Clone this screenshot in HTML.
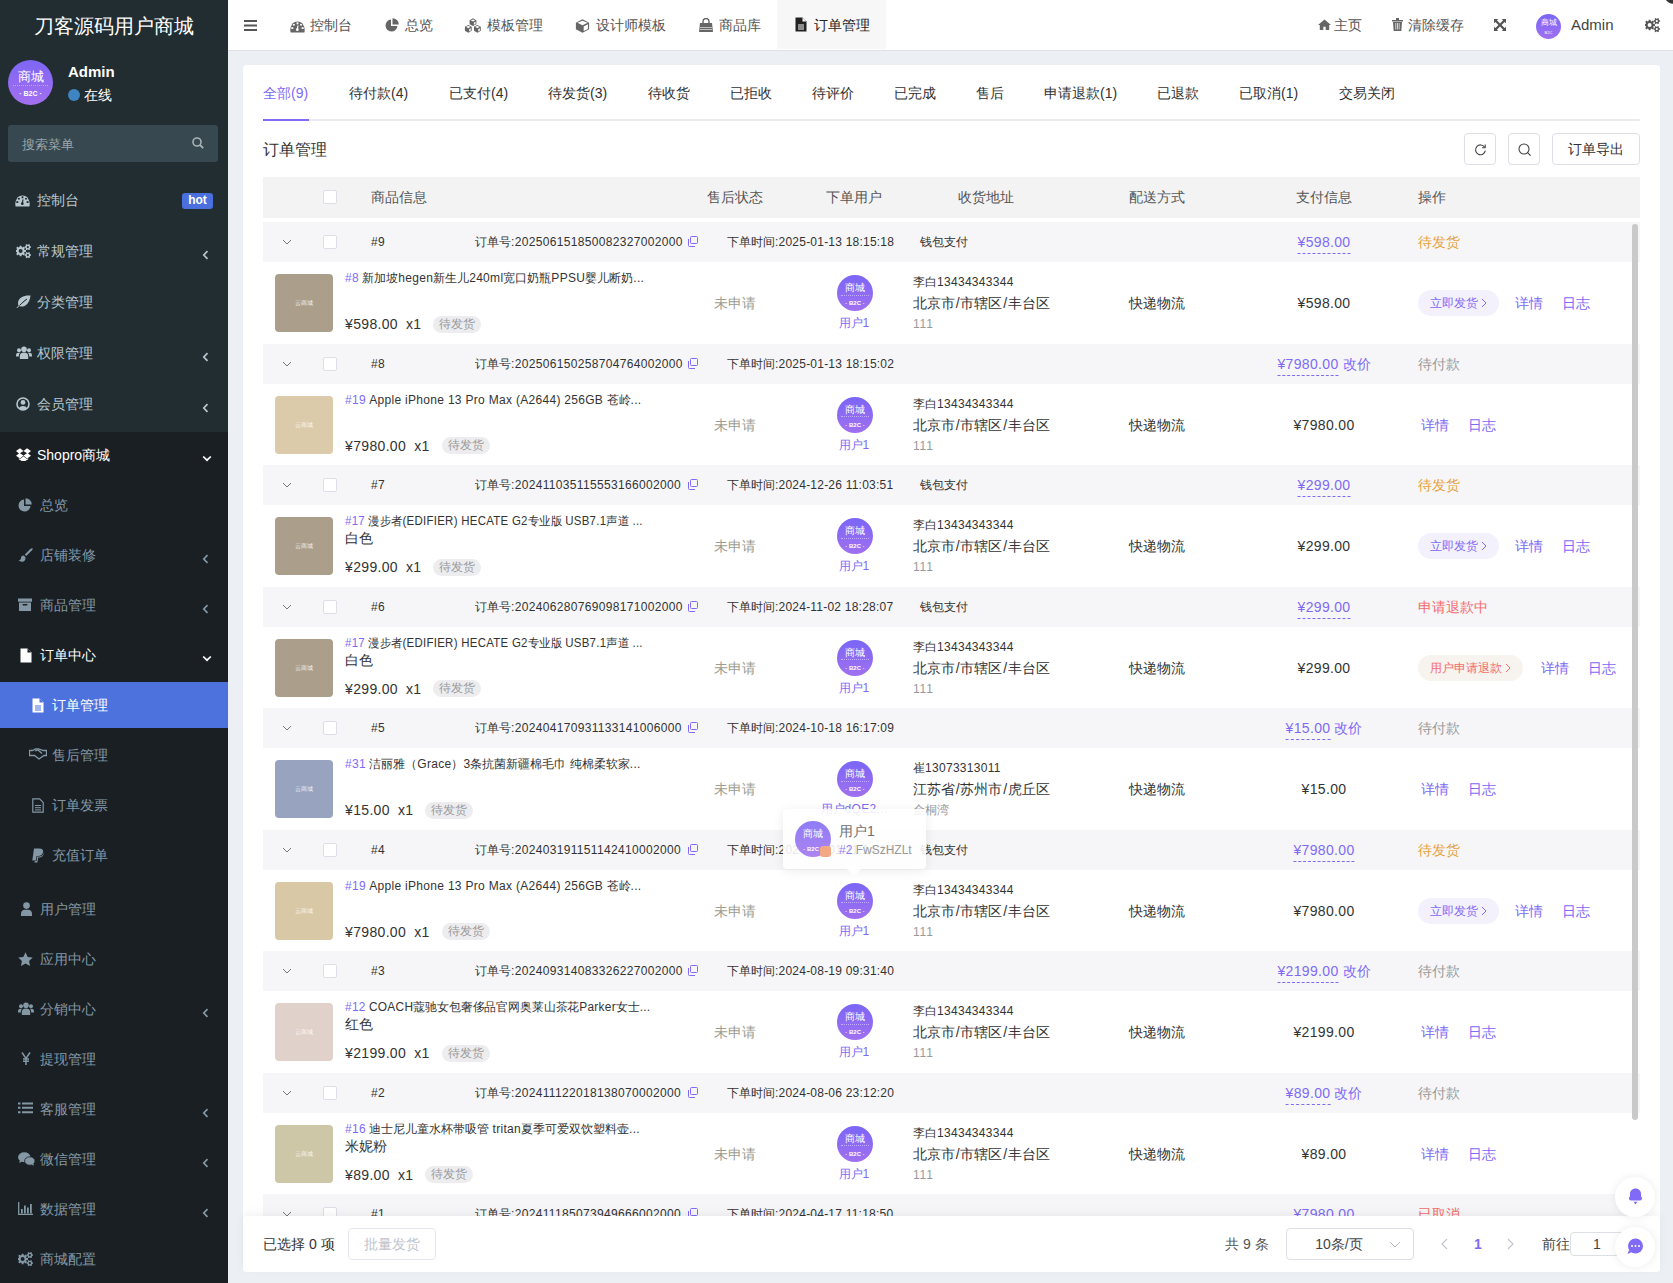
<!DOCTYPE html><html><head><meta charset="utf-8"><title>订单管理</title><style>
*{box-sizing:border-box;margin:0;padding:0}
html,body{width:1673px;height:1283px;overflow:hidden}
body{font-family:"Liberation Sans",sans-serif;background:#ecf0f5;position:relative;color:#333}
.a{position:absolute;white-space:nowrap}
.c{transform:translateX(-50%)}
svg{display:block}
#sb{position:absolute;left:0;top:0;width:228px;height:1283px;background:#1a1f24}
#sbtop{position:absolute;left:0;top:0;width:228px;height:432px;background:#222d32}
.mi{position:absolute;left:0;width:228px;height:20px;line-height:20px;font-size:14px;color:#b8c7ce}
.mi .ic{position:absolute;top:3px}
.mi .tx{position:absolute;top:0}
.arr{position:absolute;left:202px;top:5px}
#nav{position:absolute;left:228px;top:0;width:1445px;height:51px;background:#fff;border-bottom:1px solid #dde1e6}
.ni{position:absolute;top:15px;height:20px;line-height:20px;font-size:14px;color:#555}
#card{position:absolute;left:243px;top:65px;width:1417px;height:1207px;background:#fff;border-radius:4px}
.tab{position:absolute;top:83px;font-size:14px;line-height:20px;color:#303133}
.btn{position:absolute;top:133px;height:32px;border:1px solid #dcdfe6;border-radius:4px;background:#fff}
#th{position:absolute;left:263px;top:177px;width:1377px;height:41px;background:#f3f3f4}
.ht{position:absolute;top:10px;font-size:14px;line-height:20px;color:#555}
#tb{position:absolute;left:263px;top:222px;width:1377px;height:994px;overflow:hidden}
.blk{position:absolute;left:0;width:1377px;height:121.5px}
.oh{position:absolute;left:0;top:0;width:1377px;height:40px;background:#f6f6f8}
.ot{position:absolute;top:12px;font-size:12px;line-height:16px;color:#333}
.cb{position:absolute;width:14px;height:14px;border:1px solid #dcdfe6;border-radius:2px;background:#fff}
.pr{position:absolute;left:0;top:40px;width:1377px;height:81.5px;background:#fff}
.img{position:absolute;left:12px;top:12px;width:58px;height:58px;border-radius:4px}
.img span{position:absolute;left:0;top:24px;width:58px;text-align:center;font-size:6px;line-height:10px;color:rgba(255,255,255,.85)}
.t12{font-size:12px;line-height:16px}
.t14{font-size:14px;line-height:20px}
.pur{color:#806af6}
.gray{color:#999}
.tag{position:absolute;height:17px;line-height:17px;border-radius:9px;background:#ededf0;color:#999;font-size:12px;padding:0 6px}
.av{position:absolute;width:36px;height:36px;border-radius:50%;background:linear-gradient(180deg,#7a66f5,#a070f0);overflow:hidden}
.av i{position:absolute;left:0;width:36px;text-align:center;color:#fff;font-style:normal}
.pill{position:absolute;height:26px;line-height:26px;border-radius:13px;font-size:12px;padding:0 12px}
.dash{border-bottom:1px dashed #806af6;padding-bottom:3px}
</style></head><body><div id="sb"><div id="sbtop"></div><div class="a" style="left:0;top:14px;width:228px;text-align:center;font-size:20px;line-height:24px;color:#fff">刀客源码用户商城</div><div class="av" style="left:8px;top:60px;width:45px;height:45px;background:linear-gradient(180deg,#7d66f4,#a46ff0)"><i style="top:9px;width:45px;font-size:13px;line-height:15px">商城</i><i style="top:25px;left:5px;width:35px;border-top:1px dotted rgba(255,255,255,.4);height:0"></i><i style="top:29px;width:45px;font-size:7px;line-height:10px;font-weight:bold">· B2C ·</i></div><div class="a" style="left:68px;top:62px;font-size:15px;line-height:20px;font-weight:bold;color:#fff">Admin</div><div class="a" style="left:68px;top:89px;width:12px;height:12px;border-radius:50%;background:#3d84c0"></div><div class="a" style="left:84px;top:86px;font-size:14px;line-height:18px;color:#fff">在线</div><div class="a" style="left:8px;top:125px;width:210px;height:37px;border-radius:3px;background:#374850"></div><div class="a" style="left:22px;top:136px;font-size:13px;line-height:18px;color:#9aa6ab">搜索菜单</div><div class="a" style="left:192px;top:137px"><svg width="12" height="12" viewBox="0 0 12 12"><circle cx="5" cy="5" r="4" fill="none" stroke="#a9b3b7" stroke-width="1.6"/><path d="M8 8l3.2 3.2" stroke="#a9b3b7" stroke-width="1.8"/></svg></div><div class="mi" style="top:190px;color:#b8c7ce"><div class="ic" style="left:15px"><svg width="15" height="14" viewBox="0 -2 15 14"><path d="M0.6 11.5A7.2 8.6 0 1 1 14.4 11.5Z" fill="#b8c7ce"/><rect x="6.6" y="1.3" width="1.8" height="2" fill="#222d32"/><rect x="1.3" y="6.2" width="2" height="1.8" fill="#222d32"/><rect x="11.6" y="6.2" width="2" height="1.8" fill="#222d32"/><circle cx="3.9" cy="3.8" r="1" fill="#222d32"/><circle cx="11" cy="3.8" r="1" fill="#222d32"/><circle cx="7.3" cy="8.7" r="1.4" fill="#222d32"/><path d="M7.3 8.7L8 4.5" stroke="#222d32" stroke-width="1.2"/></svg></div><div class="tx" style="left:37px;">控制台</div></div><div class="a" style="left:182px;top:193px;width:31px;height:16px;border-radius:3px;background:#4b6fdc;color:#fff;font-size:12px;line-height:14px;font-weight:bold;text-align:center">hot</div><div class="mi" style="top:241px;color:#b8c7ce"><div class="ic" style="left:16px"><svg width="16" height="15" viewBox="0 0 16 15"><path fill-rule="evenodd" fill="#b8c7ce" d="M8.57 5.99 L9.92 6.07 L9.92 7.93 L8.57 8.01 L8.12 9.10 L9.02 10.11 L7.71 11.42 L6.70 10.52 L5.61 10.97 L5.53 12.32 L3.67 12.32 L3.59 10.97 L2.50 10.52 L1.49 11.42 L0.18 10.11 L1.08 9.10 L0.63 8.01 L-0.72 7.93 L-0.72 6.07 L0.63 5.99 L1.08 4.90 L0.18 3.89 L1.49 2.58 L2.50 3.48 L3.59 3.03 L3.67 1.68 L5.53 1.68 L5.61 3.03 L6.70 3.48 L7.71 2.58 L9.02 3.89 L8.12 4.90Z M6.60 7.00 A2.0 2.0 0 1 0 2.60 7.00 A2.0 2.0 0 1 0 6.60 7.00Z"/><path fill-rule="evenodd" fill="#b8c7ce" d="M14.19 2.36 L15.03 2.41 L15.03 3.79 L14.19 3.84 L13.64 4.80 L14.01 5.55 L12.82 6.24 L12.35 5.54 L11.25 5.54 L10.78 6.24 L9.59 5.55 L9.96 4.80 L9.41 3.84 L8.57 3.79 L8.57 2.41 L9.41 2.36 L9.96 1.40 L9.59 0.65 L10.78 -0.04 L11.25 0.66 L12.35 0.66 L12.82 -0.04 L14.01 0.65 L13.64 1.40Z M12.90 3.10 A1.1 1.1 0 1 0 10.70 3.10 A1.1 1.1 0 1 0 12.90 3.10Z"/><path fill-rule="evenodd" fill="#b8c7ce" d="M14.19 10.36 L15.03 10.41 L15.03 11.79 L14.19 11.84 L13.64 12.80 L14.01 13.55 L12.82 14.24 L12.35 13.54 L11.25 13.54 L10.78 14.24 L9.59 13.55 L9.96 12.80 L9.41 11.84 L8.57 11.79 L8.57 10.41 L9.41 10.36 L9.96 9.40 L9.59 8.65 L10.78 7.96 L11.25 8.66 L12.35 8.66 L12.82 7.96 L14.01 8.65 L13.64 9.40Z M12.90 11.10 A1.1 1.1 0 1 0 10.70 11.10 A1.1 1.1 0 1 0 12.90 11.10Z"/></svg></div><div class="tx" style="left:37px;">常规管理</div><div class="arr" style="left:202px;top:9px"><svg width="7" height="10" viewBox="0 0 7 10"><path d="M5.5 1.2L1.8 5l3.7 3.8" fill="none" stroke="#b8c7ce" stroke-width="1.7"/></svg></div></div><div class="mi" style="top:292px;color:#b8c7ce"><div class="ic" style="left:16px"><svg width="15" height="13" viewBox="0 0 15 13"><path d="M14.5 0.5C9 0 2.5 1.5 2 8c0 1 .2 2 .6 2.7L0.5 12.5 1.3 13l2-2c4 2 10.2-1 11.2-10.5z" fill="#b8c7ce"/><path d="M3.5 10.5C6 8 8 6 11 4" stroke="#222d32" stroke-width="1"/></svg></div><div class="tx" style="left:37px;">分类管理</div></div><div class="mi" style="top:343px;color:#b8c7ce"><div class="ic" style="left:16px"><svg width="16" height="13" viewBox="0 0 16 13"><circle cx="8" cy="3.3" r="2.8" fill="#b8c7ce"/><circle cx="3" cy="4.2" r="2" fill="#b8c7ce"/><circle cx="13" cy="4.2" r="2" fill="#b8c7ce"/><path d="M3.8 13v-3a4.2 3.5 0 0 1 8.4 0v3z" fill="#b8c7ce"/><path d="M0 10.5v-1.5a3 2.4 0 0 1 4-2.2 5 5 0 0 0-1.2 3.2v.5z" fill="#b8c7ce"/><path d="M16 10.5v-1.5a3 2.4 0 0 0-4-2.2 5 5 0 0 1 1.2 3.2v.5z" fill="#b8c7ce"/></svg></div><div class="tx" style="left:37px;">权限管理</div><div class="arr" style="left:202px;top:9px"><svg width="7" height="10" viewBox="0 0 7 10"><path d="M5.5 1.2L1.8 5l3.7 3.8" fill="none" stroke="#b8c7ce" stroke-width="1.7"/></svg></div></div><div class="mi" style="top:394px;color:#b8c7ce"><div class="ic" style="left:16px"><svg width="14" height="14" viewBox="0 0 14 14"><circle cx="7" cy="7" r="6" fill="none" stroke="#b8c7ce" stroke-width="1.6"/><circle cx="7" cy="5.4" r="2.4" fill="#b8c7ce"/><path d="M2.8 11.2a4.6 3.6 0 0 1 8.4 0A6 6 0 0 1 2.8 11.2z" fill="#b8c7ce"/></svg></div><div class="tx" style="left:37px;">会员管理</div><div class="arr" style="left:202px;top:9px"><svg width="7" height="10" viewBox="0 0 7 10"><path d="M5.5 1.2L1.8 5l3.7 3.8" fill="none" stroke="#b8c7ce" stroke-width="1.7"/></svg></div></div><div class="mi" style="top:445px;color:#fff"><div class="ic" style="left:16px"><svg width="15" height="13" viewBox="0 0 15 13"><path d="M4 0.3L0 3l3 2.4-3 2.4 4 2.6 3.5-2.9L4 5.2 7.5 3z M11 0.3L15 3l-3 2.4 3 2.4-4 2.6-3.5-2.9L11 5.2 7.5 3z M7.5 8.3L4.1 11.1l-1.3-.8v.9l4.7 2.8 4.7-2.8v-.9l-1.3.8z" fill="#fff"/></svg></div><div class="tx" style="left:37px;">Shopro商城</div><div class="arr" style="left:202px;top:10px"><svg width="10" height="7" viewBox="0 0 10 7"><path d="M1.2 1.5L5 5.2l3.8-3.7" fill="none" stroke="#fff" stroke-width="1.7"/></svg></div></div><div class="mi" style="top:495px;color:#8398a4"><div class="ic" style="left:18px"><svg width="14" height="14" viewBox="0 0 14 14"><path d="M6 1.5A6 6 0 1 0 12.5 8H6z" fill="#8398a4"/><path d="M7.5 0.2V6.5h6.3A6.3 6.3 0 0 0 7.5 .2z" fill="#8398a4"/></svg></div><div class="tx" style="left:40px;">总览</div></div><div class="mi" style="top:545px;color:#8398a4"><div class="ic" style="left:18px"><svg width="15" height="14" viewBox="0 0 15 14"><path d="M14.6 0.4c-.5-.6-1.5 0-2.3.7L6.8 6.5l1.4 1.4 5.6-5.4c.7-.8 1.3-1.6.8-2.1z" fill="#8398a4"/><path d="M5.8 7.5C4 7.5 3 8.6 3 10.1 3 11.7 1.7 12.3 0.5 12.6 2.2 13.8 4 14 5.5 13.4 7.2 12.7 7.8 11 7.3 9z" fill="#8398a4"/></svg></div><div class="tx" style="left:40px;">店铺装修</div><div class="arr" style="left:202px;top:9px"><svg width="7" height="10" viewBox="0 0 7 10"><path d="M5.5 1.2L1.8 5l3.7 3.8" fill="none" stroke="#8398a4" stroke-width="1.7"/></svg></div></div><div class="mi" style="top:595px;color:#8398a4"><div class="ic" style="left:18px"><svg width="14" height="13" viewBox="0 0 14 13"><rect x="0" y="0.5" width="14" height="3.2" fill="#8398a4"/><path d="M1 4.5h12V13H1z" fill="#8398a4"/><rect x="4.5" y="6" width="5" height="1.4" rx=".6" fill="#1a1f24"/></svg></div><div class="tx" style="left:40px;">商品管理</div><div class="arr" style="left:202px;top:9px"><svg width="7" height="10" viewBox="0 0 7 10"><path d="M5.5 1.2L1.8 5l3.7 3.8" fill="none" stroke="#8398a4" stroke-width="1.7"/></svg></div></div><div class="mi" style="top:645px;color:#fff"><div class="ic" style="left:20px"><svg width="12" height="15" viewBox="0 0 12 15"><path d="M0.5 0.5h7l4 4v10h-11z" fill="#fff"/><path d="M7.5 0.5v4h4" fill="#1a1f24"/></svg></div><div class="tx" style="left:40px;">订单中心</div><div class="arr" style="left:202px;top:10px"><svg width="10" height="7" viewBox="0 0 10 7"><path d="M1.2 1.5L5 5.2l3.8-3.7" fill="none" stroke="#fff" stroke-width="1.7"/></svg></div></div><div class="a" style="left:0;top:682px;width:228px;height:46px;background:#4d72de"></div><div class="mi" style="top:695px;color:#fff"><div class="ic" style="left:32px"><svg width="12" height="15" viewBox="0 0 12 15"><path d="M0.5 0.5h7l4 4v10h-11z" fill="#fff"/><path d="M7.5 0.5v4h4" fill="#4d72de"/><path d="M3 8h6M3 10h6M3 12h6" stroke="#4d72de" stroke-width="1.1"/></svg></div><div class="tx" style="left:52px;">订单管理</div></div><div class="mi" style="top:745px;color:#8398a4"><div class="ic" style="left:29px"><svg width="18" height="12" viewBox="0 0 18 12"><path d="M0.5 2.5h3l3-1.5h3l5 1.5h3v5h-2.5l-5 3.5-4.5-3.5h-2v0H.5z" fill="none" stroke="#8398a4" stroke-width="1.3"/><path d="M6 3l3-1 4 3.5" fill="none" stroke="#8398a4" stroke-width="1.3"/></svg></div><div class="tx" style="left:52px;">售后管理</div></div><div class="mi" style="top:795px;color:#8398a4"><div class="ic" style="left:32px"><svg width="12" height="15" viewBox="0 0 12 15"><path d="M0.8 0.8h6.8l3.6 3.6v9.8H.8z" fill="none" stroke="#8398a4" stroke-width="1.2"/><path d="M3 7.5h6M3 9.7h6M3 11.9h6" stroke="#8398a4" stroke-width="1"/></svg></div><div class="tx" style="left:52px;">订单发票</div></div><div class="mi" style="top:845px;color:#8398a4"><div class="ic" style="left:32px"><svg width="12" height="15" viewBox="0 0 12 15"><path d="M2 0.5h5.5c2.5 0 4 1.2 3.6 3.5-.5 2.8-2.5 4-5 4H4.6L3.8 12.5H0.3z" fill="#8398a4"/><path d="M11.5 4.5c.6 2.5-1.2 5-4.3 5H6.2l-.8 5H2.5l.3-1.5h1.7l.8-4.5h2c2.5 0 4-1.5 4.2-4z" fill="#8398a4"/></svg></div><div class="tx" style="left:52px;">充值订单</div></div><div class="mi" style="top:899px;color:#8398a4"><div class="ic" style="left:21px"><svg width="11" height="14" viewBox="0 0 11 14"><circle cx="5.5" cy="3.6" r="3.3" fill="#8398a4"/><path d="M0 14v-2.5C0 9.2 2 7.8 3.5 7.8h4C9 7.8 11 9.2 11 11.5V14z" fill="#8398a4"/></svg></div><div class="tx" style="left:40px;">用户管理</div></div><div class="mi" style="top:949px;color:#8398a4"><div class="ic" style="left:18px"><svg width="15" height="14" viewBox="0 0 15 14"><path d="M7.5 0.3l2.2 4.6 5 .7-3.6 3.5.9 4.9-4.5-2.4-4.5 2.4.9-4.9L0.3 5.6l5-.7z" fill="#8398a4"/></svg></div><div class="tx" style="left:40px;">应用中心</div></div><div class="mi" style="top:999px;color:#8398a4"><div class="ic" style="left:18px"><svg width="16" height="13" viewBox="0 0 16 13"><circle cx="8" cy="3.3" r="2.8" fill="#8398a4"/><circle cx="3" cy="4.2" r="2" fill="#8398a4"/><circle cx="13" cy="4.2" r="2" fill="#8398a4"/><path d="M3.8 13v-3a4.2 3.5 0 0 1 8.4 0v3z" fill="#8398a4"/><path d="M0 10.5v-1.5a3 2.4 0 0 1 4-2.2 5 5 0 0 0-1.2 3.2v.5z" fill="#8398a4"/><path d="M16 10.5v-1.5a3 2.4 0 0 0-4-2.2 5 5 0 0 1 1.2 3.2v.5z" fill="#8398a4"/></svg></div><div class="tx" style="left:40px;">分销中心</div><div class="arr" style="left:202px;top:9px"><svg width="7" height="10" viewBox="0 0 7 10"><path d="M5.5 1.2L1.8 5l3.7 3.8" fill="none" stroke="#8398a4" stroke-width="1.7"/></svg></div></div><div class="mi" style="top:1049px;color:#8398a4"><div class="ic" style="left:21px"><svg width="10" height="13" viewBox="0 0 10 13"><path d="M1 0.5l4 6 4-6M5 6.5V13M2 7h6M2 9.3h6" fill="none" stroke="#8398a4" stroke-width="1.5"/></svg></div><div class="tx" style="left:40px;">提现管理</div></div><div class="mi" style="top:1099px;color:#8398a4"><div class="ic" style="left:18px"><svg width="15" height="12" viewBox="0 0 15 12"><path d="M0 0.5h2.5v2H0zM0 4.8h2.5v2H0zM0 9.2h2.5v2H0zM4 0.5h11v2H4zM4 4.8h11v2H4zM4 9.2h11v2H4z" fill="#8398a4"/></svg></div><div class="tx" style="left:40px;">客服管理</div><div class="arr" style="left:202px;top:9px"><svg width="7" height="10" viewBox="0 0 7 10"><path d="M5.5 1.2L1.8 5l3.7 3.8" fill="none" stroke="#8398a4" stroke-width="1.7"/></svg></div></div><div class="mi" style="top:1149px;color:#8398a4"><div class="ic" style="left:18px"><svg width="17" height="14" viewBox="0 0 17 14"><ellipse cx="6.3" cy="5.2" rx="6.2" ry="5" fill="#8398a4"/><path d="M1.8 8.5L1.2 11l3-1.5z" fill="#8398a4"/><ellipse cx="11.8" cy="9" rx="5.2" ry="4.2" fill="#8398a4" stroke="#1a1f24" stroke-width=".8"/><path d="M15.3 11.5l.8 2.3-2.6-1.3z" fill="#8398a4"/></svg></div><div class="tx" style="left:40px;">微信管理</div><div class="arr" style="left:202px;top:9px"><svg width="7" height="10" viewBox="0 0 7 10"><path d="M5.5 1.2L1.8 5l3.7 3.8" fill="none" stroke="#8398a4" stroke-width="1.7"/></svg></div></div><div class="mi" style="top:1199px;color:#8398a4"><div class="ic" style="left:18px"><svg width="15" height="13" viewBox="0 0 15 13"><path d="M0.7 0v12.3H15" fill="none" stroke="#8398a4" stroke-width="1.3"/><path d="M3 7h1.8v4.5H3zM6 3.5h1.8v8H6zM9 5.5h1.8v6H9zM12 2h1.8v9.5H12z" fill="#8398a4"/></svg></div><div class="tx" style="left:40px;">数据管理</div><div class="arr" style="left:202px;top:9px"><svg width="7" height="10" viewBox="0 0 7 10"><path d="M5.5 1.2L1.8 5l3.7 3.8" fill="none" stroke="#8398a4" stroke-width="1.7"/></svg></div></div><div class="mi" style="top:1249px;color:#8398a4"><div class="ic" style="left:18px"><svg width="16" height="15" viewBox="0 0 16 15"><path fill-rule="evenodd" fill="#8398a4" d="M8.57 5.99 L9.92 6.07 L9.92 7.93 L8.57 8.01 L8.12 9.10 L9.02 10.11 L7.71 11.42 L6.70 10.52 L5.61 10.97 L5.53 12.32 L3.67 12.32 L3.59 10.97 L2.50 10.52 L1.49 11.42 L0.18 10.11 L1.08 9.10 L0.63 8.01 L-0.72 7.93 L-0.72 6.07 L0.63 5.99 L1.08 4.90 L0.18 3.89 L1.49 2.58 L2.50 3.48 L3.59 3.03 L3.67 1.68 L5.53 1.68 L5.61 3.03 L6.70 3.48 L7.71 2.58 L9.02 3.89 L8.12 4.90Z M6.60 7.00 A2.0 2.0 0 1 0 2.60 7.00 A2.0 2.0 0 1 0 6.60 7.00Z"/><path fill-rule="evenodd" fill="#8398a4" d="M14.19 2.36 L15.03 2.41 L15.03 3.79 L14.19 3.84 L13.64 4.80 L14.01 5.55 L12.82 6.24 L12.35 5.54 L11.25 5.54 L10.78 6.24 L9.59 5.55 L9.96 4.80 L9.41 3.84 L8.57 3.79 L8.57 2.41 L9.41 2.36 L9.96 1.40 L9.59 0.65 L10.78 -0.04 L11.25 0.66 L12.35 0.66 L12.82 -0.04 L14.01 0.65 L13.64 1.40Z M12.90 3.10 A1.1 1.1 0 1 0 10.70 3.10 A1.1 1.1 0 1 0 12.90 3.10Z"/><path fill-rule="evenodd" fill="#8398a4" d="M14.19 10.36 L15.03 10.41 L15.03 11.79 L14.19 11.84 L13.64 12.80 L14.01 13.55 L12.82 14.24 L12.35 13.54 L11.25 13.54 L10.78 14.24 L9.59 13.55 L9.96 12.80 L9.41 11.84 L8.57 11.79 L8.57 10.41 L9.41 10.36 L9.96 9.40 L9.59 8.65 L10.78 7.96 L11.25 8.66 L12.35 8.66 L12.82 7.96 L14.01 8.65 L13.64 9.40Z M12.90 11.10 A1.1 1.1 0 1 0 10.70 11.10 A1.1 1.1 0 1 0 12.90 11.10Z"/></svg></div><div class="tx" style="left:40px;">商城配置</div></div></div><div id="nav"><div class="a" style="left:549px;top:0;width:109px;height:49px;background:#f7f7f7"></div><div class="a" style="left:16px;top:20px"><svg width="13" height="11" viewBox="0 0 13 11"><path d="M0 1h13M0 5.5h13M0 10h13" stroke="#555" stroke-width="2"/></svg></div><div class="a" style="left:62px;top:19px"><svg width="15" height="14" viewBox="0 -2 15 14"><path d="M0.6 11.5A7.2 8.6 0 1 1 14.4 11.5Z" fill="#666"/><rect x="6.6" y="1.3" width="1.8" height="2" fill="#fff"/><rect x="1.3" y="6.2" width="2" height="1.8" fill="#fff"/><rect x="11.6" y="6.2" width="2" height="1.8" fill="#fff"/><circle cx="3.9" cy="3.8" r="1" fill="#fff"/><circle cx="11" cy="3.8" r="1" fill="#fff"/><circle cx="7.3" cy="8.7" r="1.4" fill="#fff"/><path d="M7.3 8.7L8 4.5" stroke="#fff" stroke-width="1.2"/></svg></div><div class="ni" style="left:82px;color:#555">控制台</div><div class="a" style="left:157px;top:18px"><svg width="14" height="14" viewBox="0 0 14 14"><path d="M6 1.5A6 6 0 1 0 12.5 8H6z" fill="#666"/><path d="M7.5 0.2V6.5h6.3A6.3 6.3 0 0 0 7.5 .2z" fill="#666"/></svg></div><div class="ni" style="left:177px;color:#555">总览</div><div class="a" style="left:235.5px;top:17.5px"><svg width="18" height="15" viewBox="0 0 18 15"><path d="M9 0.30000000000000027 L12.393 2.25 L12.393 6.15 L9 8.1 L5.607 6.15 L5.607 2.25Z" fill="#666"/><path d="M9 1.5100000000000005 L11.293000000000001 2.25 L9 3.54 L6.707000000000001 2.25Z" fill="#fff"/><path d="M9.88 4.640000000000001 L11.513 3.5700000000000003 L11.513 5.930000000000001 L9.88 6.779999999999999Z" fill="#fff"/><path d="M4.3 6.9 L7.693 8.850000000000001 L7.693 12.75 L4.3 14.700000000000001 L0.907 12.75 L0.907 8.850000000000001Z" fill="#666"/><path d="M4.3 8.110000000000001 L6.593 8.850000000000001 L4.3 10.14 L2.007 8.850000000000001Z" fill="#fff"/><path d="M5.18 11.24 L6.813 10.170000000000002 L6.813 12.53 L5.18 13.38Z" fill="#fff"/><path d="M13.4 6.9 L16.793 8.850000000000001 L16.793 12.75 L13.4 14.700000000000001 L10.007000000000001 12.75 L10.007000000000001 8.850000000000001Z" fill="#666"/><path d="M13.4 8.110000000000001 L15.693 8.850000000000001 L13.4 10.14 L11.107000000000001 8.850000000000001Z" fill="#fff"/><path d="M14.280000000000001 11.24 L15.912999999999998 10.170000000000002 L15.912999999999998 12.53 L14.280000000000001 13.38Z" fill="#fff"/></svg></div><div class="ni" style="left:259px;color:#555">模板管理</div><div class="a" style="left:346.5px;top:18.5px"><svg width="15" height="14" viewBox="0 0 15 16" preserveAspectRatio="none"><path d="M7.5 0.40000000000000036 L14.112 4.2 L14.112 11.8 L7.5 15.6 L0.8879999999999999 11.8 L0.8879999999999999 4.2Z" fill="#666"/><path d="M7.5 2.0500000000000007 L12.612 4.2 L7.5 7.1 L2.388 4.2Z" fill="#fff"/><path d="M8.7 8.6 L12.911999999999999 6.0 L12.911999999999999 11.5 L8.7 13.8Z" fill="#fff"/></svg></div><div class="ni" style="left:368px;color:#555">设计师模板</div><div class="a" style="left:471px;top:18px"><svg width="14" height="14" viewBox="0 0 14 14"><path d="M1 5h12l1 9H0z" fill="#666"/><path d="M4 6V3.5a3 3 0 0 1 6 0V6" fill="none" stroke="#666" stroke-width="1.4"/><path d="M1 9.5h12M1 11.5h12" stroke="#fff" stroke-width=".6"/></svg></div><div class="ni" style="left:491px;color:#555">商品库</div><div class="a" style="left:567px;top:17px"><svg width="12" height="15" viewBox="0 0 12 15"><path d="M0.5 0.5h7l4 4v10h-11z" fill="#222"/><path d="M7.5 0.5v4h4" fill="#f7f7f7"/><path d="M3 8h6M3 10h6M3 12h6" stroke="#f7f7f7" stroke-width="1.1"/></svg></div><div class="ni" style="left:586px;color:#222">订单管理</div><div class="a" style="left:1090px;top:19px"><svg width="13" height="11" viewBox="0 0 13 11"><path d="M6.5 0.5L0 6h1.8v5h3.5V7.8h2.4V11h3.5V6H13z" fill="#666"/></svg></div><div class="ni" style="left:1106px">主页</div><div class="a" style="left:1164px;top:18px"><svg width="11" height="13" viewBox="0 0 11 13"><path d="M0 2h11v1.5H0zM4 0h3v2H4z" fill="#666"/><path d="M1 4h9l-.7 9H1.7z" fill="#666"/><path d="M3.8 5v6.5M5.5 5v6.5M7.2 5v6.5" stroke="#fff" stroke-width=".7"/></svg></div><div class="ni" style="left:1180px">清除缓存</div><div class="a" style="left:1266px;top:19px"><svg width="12" height="12" viewBox="0 0 14 14"><path d="M0 0h5L3.4 1.6 7 5.2 10.6 1.6 9 0h5v5l-1.6-1.6L8.8 7l3.6 3.6L14 9v5H9l1.6-1.6L7 8.8 3.4 12.4 5 14H0V9l1.6 1.6L5.2 7 1.6 3.4 0 5z" fill="#555"/></svg></div><div class="av" style="left:1308px;top:14px;width:25px;height:25px"><i style="top:4px;width:25px;font-size:8px;line-height:9px">商城</i><i style="top:16px;width:25px;font-size:4px;line-height:5px">B2C</i></div><div class="ni" style="left:1343px;top:15px;font-size:15px;color:#444">Admin</div><div class="a" style="left:1417px;top:18px"><svg width="16" height="15" viewBox="0 0 16 15"><path fill-rule="evenodd" fill="#555" d="M8.57 5.99 L9.92 6.07 L9.92 7.93 L8.57 8.01 L8.12 9.10 L9.02 10.11 L7.71 11.42 L6.70 10.52 L5.61 10.97 L5.53 12.32 L3.67 12.32 L3.59 10.97 L2.50 10.52 L1.49 11.42 L0.18 10.11 L1.08 9.10 L0.63 8.01 L-0.72 7.93 L-0.72 6.07 L0.63 5.99 L1.08 4.90 L0.18 3.89 L1.49 2.58 L2.50 3.48 L3.59 3.03 L3.67 1.68 L5.53 1.68 L5.61 3.03 L6.70 3.48 L7.71 2.58 L9.02 3.89 L8.12 4.90Z M6.60 7.00 A2.0 2.0 0 1 0 2.60 7.00 A2.0 2.0 0 1 0 6.60 7.00Z"/><path fill-rule="evenodd" fill="#555" d="M14.19 2.36 L15.03 2.41 L15.03 3.79 L14.19 3.84 L13.64 4.80 L14.01 5.55 L12.82 6.24 L12.35 5.54 L11.25 5.54 L10.78 6.24 L9.59 5.55 L9.96 4.80 L9.41 3.84 L8.57 3.79 L8.57 2.41 L9.41 2.36 L9.96 1.40 L9.59 0.65 L10.78 -0.04 L11.25 0.66 L12.35 0.66 L12.82 -0.04 L14.01 0.65 L13.64 1.40Z M12.90 3.10 A1.1 1.1 0 1 0 10.70 3.10 A1.1 1.1 0 1 0 12.90 3.10Z"/><path fill-rule="evenodd" fill="#555" d="M14.19 10.36 L15.03 10.41 L15.03 11.79 L14.19 11.84 L13.64 12.80 L14.01 13.55 L12.82 14.24 L12.35 13.54 L11.25 13.54 L10.78 14.24 L9.59 13.55 L9.96 12.80 L9.41 11.84 L8.57 11.79 L8.57 10.41 L9.41 10.36 L9.96 9.40 L9.59 8.65 L10.78 7.96 L11.25 8.66 L12.35 8.66 L12.82 7.96 L14.01 8.65 L13.64 9.40Z M12.90 11.10 A1.1 1.1 0 1 0 10.70 11.10 A1.1 1.1 0 1 0 12.90 11.10Z"/></svg></div></div><div id="card"></div><div class="tab" style="left:263px;color:#806af6">全部(9)</div><div class="tab" style="left:349px;color:#303133">待付款(4)</div><div class="tab" style="left:449px;color:#303133">已支付(4)</div><div class="tab" style="left:548px;color:#303133">待发货(3)</div><div class="tab" style="left:648px;color:#303133">待收货</div><div class="tab" style="left:730px;color:#303133">已拒收</div><div class="tab" style="left:812px;color:#303133">待评价</div><div class="tab" style="left:894px;color:#303133">已完成</div><div class="tab" style="left:976px;color:#303133">售后</div><div class="tab" style="left:1044px;color:#303133">申请退款(1)</div><div class="tab" style="left:1157px;color:#303133">已退款</div><div class="tab" style="left:1239px;color:#303133">已取消(1)</div><div class="tab" style="left:1339px;color:#303133">交易关闭</div><div class="a" style="left:263px;top:119px;width:1377px;height:2px;background:#e9ecf0"></div><div class="a" style="left:263px;top:119px;width:46px;height:2px;background:#806af6"></div><div class="a" style="left:263px;top:139px;font-size:16px;line-height:22px;color:#303133">订单管理</div><div class="btn" style="left:1464px;width:32px"><svg style="position:absolute;left:9px;top:9px" width="13" height="13" viewBox="0 0 13 13"><path d="M10.6 4.2A4.9 4.9 0 1 0 11.3 7.6" fill="none" stroke="#444" stroke-width="1.1"/><path d="M11.2 1.6v3.2H8" fill="none" stroke="#444" stroke-width="1.1"/></svg></div><div class="btn" style="left:1508px;width:32px"><svg style="position:absolute;left:9px;top:9px" width="14" height="14" viewBox="0 0 14 14"><circle cx="6" cy="6" r="5" fill="none" stroke="#444" stroke-width="1.1"/><path d="M9.6 9.6l3 3" stroke="#444" stroke-width="1.1"/></svg></div><div class="btn" style="left:1552px;width:88px;font-size:14px;line-height:30px;text-align:center;color:#303133">订单导出</div><div id="th"><div class="cb" style="left:60px;top:13px"></div><div class="ht" style="left:108px">商品信息</div><div class="ht c" style="left:472px">售后状态</div><div class="ht c" style="left:591px">下单用户</div><div class="ht c" style="left:723px">收货地址</div><div class="ht c" style="left:894px">配送方式</div><div class="ht c" style="left:1061px">支付信息</div><div class="ht" style="left:1155px">操作</div></div><div id="tb"><div class="blk" style="top:0.000px"><div class="oh"><div class="a" style="left:19px;top:17px"><svg width="10" height="6" viewBox="0 0 10 6"><path d="M1 1l4 4 4-4" fill="none" stroke="#777" stroke-width="1"/></svg></div><div class="cb" style="left:60px;top:13px"></div><div class="ot" style="left:108px"><span style="letter-spacing:0.3px">#9</span></div><div class="ot" style="left:212px">订单号<span style="letter-spacing:0.33px">:202506151850082327002000</span></div><div class="a" style="left:424px;top:14px"><svg width="11" height="11" viewBox="0 0 11 11"><rect x="3.5" y="0.5" width="7" height="7" rx="1" fill="none" stroke="#806af6" stroke-width="1"/><path d="M1.5 3v6.5a1 1 0 0 0 1 1H8" fill="none" stroke="#806af6" stroke-width="1"/></svg></div><div class="ot" style="left:464px">下单时间<span style="letter-spacing:0.22px">:2025-01-13 18:15:18</span></div><div class="ot" style="left:657px">钱包支付</div><div class="a t14 pur c" style="left:1061px;top:10px"><span class="dash"><span style="letter-spacing:0.34px">¥598.00</span></span></div><div class="a t14" style="left:1155px;top:10px;color:#e6a23c">待发货</div></div><div class="pr"><div class="img" style="background:#ab9f8c"><span>云商城</span></div><div class="a t12" style="left:82px;top:8px;transform-origin:0 0;transform:scaleX(1)"><span class="pur"><span style="letter-spacing:0.3px">#8</span></span> 新加坡<span style="letter-spacing:0.3px">hegen</span>新生儿<span style="letter-spacing:0.3px">240ml</span>宽口奶瓶<span style="letter-spacing:0.3px">PPSU</span>婴儿断奶<span style="letter-spacing:0.3px">...</span></div><div class="a t14" style="left:82px;top:52px;display:flex;align-items:center"><span style="letter-spacing:0.34px">¥598.00</span><span style="margin-left:8px"><span style="letter-spacing:0.3px">x1</span></span><span class="tag" style="position:static;margin-left:12px;display:inline-block">待发货</span></div><div class="a t14 c" style="left:472px;top:31px;color:#9d9d92">未申请</div><div class="av" style="left:574px;top:13px;width:36px;height:36px"><i style="top:7.0px;width:36px;font-size:10.0px;line-height:12.0px">商城</i><i style="top:19.5px;left:4.0px;width:28.0px;border-top:1px dotted rgba(255,255,255,.45);height:0"></i><i style="top:24.0px;width:36px;font-size:6.0px;line-height:8.0px;font-weight:bold">· B2C ·</i></div><div class="a t12 pur c" style="left:591px;top:53px">用户<span style="letter-spacing:0.3px">1</span></div><div class="a t12" style="left:650px;top:12px">李白<span style="letter-spacing:0.3px">13434343344</span></div><div class="a t14" style="left:650px;top:31px">北京市<span style="margin:0 .8px">/</span>市辖区<span style="margin:0 .8px">/</span>丰台区</div><div class="a t12 gray" style="left:650px;top:54px"><span style="letter-spacing:0.8px">111</span></div><div class="a t14 c" style="left:894px;top:31px">快递物流</div><div class="a t14 c" style="left:1061px;top:31px"><span style="letter-spacing:0.34px">¥598.00</span></div><div class="pill pur" style="left:1155px;top:28px;background:#f3f1fc">立即发货<svg style="display:inline-block;vertical-align:-1px;margin-left:3px" width="6" height="10" viewBox="0 0 6 10"><path d="M1 1l4 4-4 4" fill="none" stroke="currentColor" stroke-width="1"/></svg></div><div class="a t14 pur" style="left:1252px;top:31px">详情</div><div class="a t14 pur" style="left:1299px;top:31px">日志</div></div></div><div class="blk" style="top:121.500px"><div class="oh"><div class="a" style="left:19px;top:17px"><svg width="10" height="6" viewBox="0 0 10 6"><path d="M1 1l4 4 4-4" fill="none" stroke="#777" stroke-width="1"/></svg></div><div class="cb" style="left:60px;top:13px"></div><div class="ot" style="left:108px"><span style="letter-spacing:0.3px">#8</span></div><div class="ot" style="left:212px">订单号<span style="letter-spacing:0.33px">:202506150258704764002000</span></div><div class="a" style="left:424px;top:14px"><svg width="11" height="11" viewBox="0 0 11 11"><rect x="3.5" y="0.5" width="7" height="7" rx="1" fill="none" stroke="#806af6" stroke-width="1"/><path d="M1.5 3v6.5a1 1 0 0 0 1 1H8" fill="none" stroke="#806af6" stroke-width="1"/></svg></div><div class="ot" style="left:464px">下单时间<span style="letter-spacing:0.22px">:2025-01-13 18:15:02</span></div><div class="a t14 pur c" style="left:1061px;top:10px"><span class="dash"><span style="letter-spacing:0.34px">¥7980.00</span></span> 改价</div><div class="a t14" style="left:1155px;top:10px;color:#999">待付款</div></div><div class="pr"><div class="img" style="background:#dccbab"><span>云商城</span></div><div class="a t12" style="left:82px;top:8px;transform-origin:0 0;transform:scaleX(1)"><span class="pur"><span style="letter-spacing:0.3px">#19</span></span> <span style="letter-spacing:0.3px">Apple iPhone 13 Pro Max (A2644) 256GB</span> 苍岭<span style="letter-spacing:0.3px">...</span></div><div class="a t14" style="left:82px;top:52px;display:flex;align-items:center"><span style="letter-spacing:0.34px">¥7980.00</span><span style="margin-left:8px"><span style="letter-spacing:0.3px">x1</span></span><span class="tag" style="position:static;margin-left:12px;display:inline-block">待发货</span></div><div class="a t14 c" style="left:472px;top:31px;color:#9d9d92">未申请</div><div class="av" style="left:574px;top:13px;width:36px;height:36px"><i style="top:7.0px;width:36px;font-size:10.0px;line-height:12.0px">商城</i><i style="top:19.5px;left:4.0px;width:28.0px;border-top:1px dotted rgba(255,255,255,.45);height:0"></i><i style="top:24.0px;width:36px;font-size:6.0px;line-height:8.0px;font-weight:bold">· B2C ·</i></div><div class="a t12 pur c" style="left:591px;top:53px">用户<span style="letter-spacing:0.3px">1</span></div><div class="a t12" style="left:650px;top:12px">李白<span style="letter-spacing:0.3px">13434343344</span></div><div class="a t14" style="left:650px;top:31px">北京市<span style="margin:0 .8px">/</span>市辖区<span style="margin:0 .8px">/</span>丰台区</div><div class="a t12 gray" style="left:650px;top:54px"><span style="letter-spacing:0.8px">111</span></div><div class="a t14 c" style="left:894px;top:31px">快递物流</div><div class="a t14 c" style="left:1061px;top:31px"><span style="letter-spacing:0.34px">¥7980.00</span></div><div class="a t14 pur" style="left:1158px;top:31px">详情</div><div class="a t14 pur" style="left:1205px;top:31px">日志</div></div></div><div class="blk" style="top:243.000px"><div class="oh"><div class="a" style="left:19px;top:17px"><svg width="10" height="6" viewBox="0 0 10 6"><path d="M1 1l4 4 4-4" fill="none" stroke="#777" stroke-width="1"/></svg></div><div class="cb" style="left:60px;top:13px"></div><div class="ot" style="left:108px"><span style="letter-spacing:0.3px">#7</span></div><div class="ot" style="left:212px">订单号<span style="letter-spacing:0.33px">:202411035115553166002000</span></div><div class="a" style="left:424px;top:14px"><svg width="11" height="11" viewBox="0 0 11 11"><rect x="3.5" y="0.5" width="7" height="7" rx="1" fill="none" stroke="#806af6" stroke-width="1"/><path d="M1.5 3v6.5a1 1 0 0 0 1 1H8" fill="none" stroke="#806af6" stroke-width="1"/></svg></div><div class="ot" style="left:464px">下单时间<span style="letter-spacing:0.22px">:2024-12-26 11:03:51</span></div><div class="ot" style="left:657px">钱包支付</div><div class="a t14 pur c" style="left:1061px;top:10px"><span class="dash"><span style="letter-spacing:0.34px">¥299.00</span></span></div><div class="a t14" style="left:1155px;top:10px;color:#e6a23c">待发货</div></div><div class="pr"><div class="img" style="background:#ab9f8c"><span>云商城</span></div><div class="a t12" style="left:82px;top:8px;transform-origin:0 0;transform:scaleX(0.953)"><span class="pur"><span style="letter-spacing:0.3px">#17</span></span> 漫步者<span style="letter-spacing:0.3px">(EDIFIER) HECATE G2</span>专业版 <span style="letter-spacing:0.3px">USB7.1</span>声道 <span style="letter-spacing:0.3px">...</span></div><div class="a" style="left:82px;top:24px;font-size:14px;line-height:18px">白色</div><div class="a t14" style="left:82px;top:52px;display:flex;align-items:center"><span style="letter-spacing:0.34px">¥299.00</span><span style="margin-left:8px"><span style="letter-spacing:0.3px">x1</span></span><span class="tag" style="position:static;margin-left:12px;display:inline-block">待发货</span></div><div class="a t14 c" style="left:472px;top:31px;color:#9d9d92">未申请</div><div class="av" style="left:574px;top:13px;width:36px;height:36px"><i style="top:7.0px;width:36px;font-size:10.0px;line-height:12.0px">商城</i><i style="top:19.5px;left:4.0px;width:28.0px;border-top:1px dotted rgba(255,255,255,.45);height:0"></i><i style="top:24.0px;width:36px;font-size:6.0px;line-height:8.0px;font-weight:bold">· B2C ·</i></div><div class="a t12 pur c" style="left:591px;top:53px">用户<span style="letter-spacing:0.3px">1</span></div><div class="a t12" style="left:650px;top:12px">李白<span style="letter-spacing:0.3px">13434343344</span></div><div class="a t14" style="left:650px;top:31px">北京市<span style="margin:0 .8px">/</span>市辖区<span style="margin:0 .8px">/</span>丰台区</div><div class="a t12 gray" style="left:650px;top:54px"><span style="letter-spacing:0.8px">111</span></div><div class="a t14 c" style="left:894px;top:31px">快递物流</div><div class="a t14 c" style="left:1061px;top:31px"><span style="letter-spacing:0.34px">¥299.00</span></div><div class="pill pur" style="left:1155px;top:28px;background:#f3f1fc">立即发货<svg style="display:inline-block;vertical-align:-1px;margin-left:3px" width="6" height="10" viewBox="0 0 6 10"><path d="M1 1l4 4-4 4" fill="none" stroke="currentColor" stroke-width="1"/></svg></div><div class="a t14 pur" style="left:1252px;top:31px">详情</div><div class="a t14 pur" style="left:1299px;top:31px">日志</div></div></div><div class="blk" style="top:364.500px"><div class="oh"><div class="a" style="left:19px;top:17px"><svg width="10" height="6" viewBox="0 0 10 6"><path d="M1 1l4 4 4-4" fill="none" stroke="#777" stroke-width="1"/></svg></div><div class="cb" style="left:60px;top:13px"></div><div class="ot" style="left:108px"><span style="letter-spacing:0.3px">#6</span></div><div class="ot" style="left:212px">订单号<span style="letter-spacing:0.33px">:202406280769098171002000</span></div><div class="a" style="left:424px;top:14px"><svg width="11" height="11" viewBox="0 0 11 11"><rect x="3.5" y="0.5" width="7" height="7" rx="1" fill="none" stroke="#806af6" stroke-width="1"/><path d="M1.5 3v6.5a1 1 0 0 0 1 1H8" fill="none" stroke="#806af6" stroke-width="1"/></svg></div><div class="ot" style="left:464px">下单时间<span style="letter-spacing:0.22px">:2024-11-02 18:28:07</span></div><div class="ot" style="left:657px">钱包支付</div><div class="a t14 pur c" style="left:1061px;top:10px"><span class="dash"><span style="letter-spacing:0.34px">¥299.00</span></span></div><div class="a t14" style="left:1155px;top:10px;color:#f56c6c">申请退款中</div></div><div class="pr"><div class="img" style="background:#ab9f8c"><span>云商城</span></div><div class="a t12" style="left:82px;top:8px;transform-origin:0 0;transform:scaleX(0.953)"><span class="pur"><span style="letter-spacing:0.3px">#17</span></span> 漫步者<span style="letter-spacing:0.3px">(EDIFIER) HECATE G2</span>专业版 <span style="letter-spacing:0.3px">USB7.1</span>声道 <span style="letter-spacing:0.3px">...</span></div><div class="a" style="left:82px;top:24px;font-size:14px;line-height:18px">白色</div><div class="a t14" style="left:82px;top:52px;display:flex;align-items:center"><span style="letter-spacing:0.34px">¥299.00</span><span style="margin-left:8px"><span style="letter-spacing:0.3px">x1</span></span><span class="tag" style="position:static;margin-left:12px;display:inline-block">待发货</span></div><div class="a t14 c" style="left:472px;top:31px;color:#9d9d92">未申请</div><div class="av" style="left:574px;top:13px;width:36px;height:36px"><i style="top:7.0px;width:36px;font-size:10.0px;line-height:12.0px">商城</i><i style="top:19.5px;left:4.0px;width:28.0px;border-top:1px dotted rgba(255,255,255,.45);height:0"></i><i style="top:24.0px;width:36px;font-size:6.0px;line-height:8.0px;font-weight:bold">· B2C ·</i></div><div class="a t12 pur c" style="left:591px;top:53px">用户<span style="letter-spacing:0.3px">1</span></div><div class="a t12" style="left:650px;top:12px">李白<span style="letter-spacing:0.3px">13434343344</span></div><div class="a t14" style="left:650px;top:31px">北京市<span style="margin:0 .8px">/</span>市辖区<span style="margin:0 .8px">/</span>丰台区</div><div class="a t12 gray" style="left:650px;top:54px"><span style="letter-spacing:0.8px">111</span></div><div class="a t14 c" style="left:894px;top:31px">快递物流</div><div class="a t14 c" style="left:1061px;top:31px"><span style="letter-spacing:0.34px">¥299.00</span></div><div class="pill" style="left:1155px;top:28px;background:#f7f3ef;color:#f56c6c">用户申请退款<svg style="display:inline-block;vertical-align:-1px;margin-left:3px" width="6" height="10" viewBox="0 0 6 10"><path d="M1 1l4 4-4 4" fill="none" stroke="currentColor" stroke-width="1"/></svg></div><div class="a t14 pur" style="left:1278px;top:31px">详情</div><div class="a t14 pur" style="left:1325px;top:31px">日志</div></div></div><div class="blk" style="top:486.000px"><div class="oh"><div class="a" style="left:19px;top:17px"><svg width="10" height="6" viewBox="0 0 10 6"><path d="M1 1l4 4 4-4" fill="none" stroke="#777" stroke-width="1"/></svg></div><div class="cb" style="left:60px;top:13px"></div><div class="ot" style="left:108px"><span style="letter-spacing:0.3px">#5</span></div><div class="ot" style="left:212px">订单号<span style="letter-spacing:0.33px">:202404170931133141006000</span></div><div class="a" style="left:424px;top:14px"><svg width="11" height="11" viewBox="0 0 11 11"><rect x="3.5" y="0.5" width="7" height="7" rx="1" fill="none" stroke="#806af6" stroke-width="1"/><path d="M1.5 3v6.5a1 1 0 0 0 1 1H8" fill="none" stroke="#806af6" stroke-width="1"/></svg></div><div class="ot" style="left:464px">下单时间<span style="letter-spacing:0.22px">:2024-10-18 16:17:09</span></div><div class="a t14 pur c" style="left:1061px;top:10px"><span class="dash"><span style="letter-spacing:0.34px">¥15.00</span></span> 改价</div><div class="a t14" style="left:1155px;top:10px;color:#999">待付款</div></div><div class="pr"><div class="img" style="background:#97a3bf"><span>云商城</span></div><div class="a t12" style="left:82px;top:8px;transform-origin:0 0;transform:scaleX(1)"><span class="pur"><span style="letter-spacing:0.3px">#31</span></span> 洁丽雅（<span style="letter-spacing:0.3px">Grace</span>）<span style="letter-spacing:0.3px">3</span>条抗菌新疆棉毛巾 纯棉柔软家<span style="letter-spacing:0.3px">...</span></div><div class="a t14" style="left:82px;top:52px;display:flex;align-items:center"><span style="letter-spacing:0.34px">¥15.00</span><span style="margin-left:8px"><span style="letter-spacing:0.3px">x1</span></span><span class="tag" style="position:static;margin-left:12px;display:inline-block">待发货</span></div><div class="a t14 c" style="left:472px;top:31px;color:#9d9d92">未申请</div><div class="av" style="left:574px;top:13px;width:36px;height:36px"><i style="top:7.0px;width:36px;font-size:10.0px;line-height:12.0px">商城</i><i style="top:19.5px;left:4.0px;width:28.0px;border-top:1px dotted rgba(255,255,255,.45);height:0"></i><i style="top:24.0px;width:36px;font-size:6.0px;line-height:8.0px;font-weight:bold">· B2C ·</i></div><div class="a t12 pur c" style="left:591px;top:53px">用户<span style="letter-spacing:0.3px">dQE2...</span></div><div class="a t12" style="left:650px;top:12px">崔<span style="letter-spacing:0.3px">13073313011</span></div><div class="a t14" style="left:650px;top:31px">江苏省<span style="margin:0 .8px">/</span>苏州市<span style="margin:0 .8px">/</span>虎丘区</div><div class="a t12 gray" style="left:650px;top:54px">金桐湾</div><div class="a t14 c" style="left:894px;top:31px">快递物流</div><div class="a t14 c" style="left:1061px;top:31px"><span style="letter-spacing:0.34px">¥15.00</span></div><div class="a t14 pur" style="left:1158px;top:31px">详情</div><div class="a t14 pur" style="left:1205px;top:31px">日志</div></div></div><div class="blk" style="top:607.500px"><div class="oh"><div class="a" style="left:19px;top:17px"><svg width="10" height="6" viewBox="0 0 10 6"><path d="M1 1l4 4 4-4" fill="none" stroke="#777" stroke-width="1"/></svg></div><div class="cb" style="left:60px;top:13px"></div><div class="ot" style="left:108px"><span style="letter-spacing:0.3px">#4</span></div><div class="ot" style="left:212px">订单号<span style="letter-spacing:0.33px">:202403191151142410002000</span></div><div class="a" style="left:424px;top:14px"><svg width="11" height="11" viewBox="0 0 11 11"><rect x="3.5" y="0.5" width="7" height="7" rx="1" fill="none" stroke="#806af6" stroke-width="1"/><path d="M1.5 3v6.5a1 1 0 0 0 1 1H8" fill="none" stroke="#806af6" stroke-width="1"/></svg></div><div class="ot" style="left:464px">下单时间<span style="letter-spacing:0.22px">:2024-09-01 11:14:18</span></div><div class="ot" style="left:657px">钱包支付</div><div class="a t14 pur c" style="left:1061px;top:10px"><span class="dash"><span style="letter-spacing:0.34px">¥7980.00</span></span></div><div class="a t14" style="left:1155px;top:10px;color:#e6a23c">待发货</div></div><div class="pr"><div class="img" style="background:#d9c8a6"><span>云商城</span></div><div class="a t12" style="left:82px;top:8px;transform-origin:0 0;transform:scaleX(1)"><span class="pur"><span style="letter-spacing:0.3px">#19</span></span> <span style="letter-spacing:0.3px">Apple iPhone 13 Pro Max (A2644) 256GB</span> 苍岭<span style="letter-spacing:0.3px">...</span></div><div class="a t14" style="left:82px;top:52px;display:flex;align-items:center"><span style="letter-spacing:0.34px">¥7980.00</span><span style="margin-left:8px"><span style="letter-spacing:0.3px">x1</span></span><span class="tag" style="position:static;margin-left:12px;display:inline-block">待发货</span></div><div class="a t14 c" style="left:472px;top:31px;color:#9d9d92">未申请</div><div class="av" style="left:574px;top:13px;width:36px;height:36px"><i style="top:7.0px;width:36px;font-size:10.0px;line-height:12.0px">商城</i><i style="top:19.5px;left:4.0px;width:28.0px;border-top:1px dotted rgba(255,255,255,.45);height:0"></i><i style="top:24.0px;width:36px;font-size:6.0px;line-height:8.0px;font-weight:bold">· B2C ·</i></div><div class="a t12 pur c" style="left:591px;top:53px">用户<span style="letter-spacing:0.3px">1</span></div><div class="a t12" style="left:650px;top:12px">李白<span style="letter-spacing:0.3px">13434343344</span></div><div class="a t14" style="left:650px;top:31px">北京市<span style="margin:0 .8px">/</span>市辖区<span style="margin:0 .8px">/</span>丰台区</div><div class="a t12 gray" style="left:650px;top:54px"><span style="letter-spacing:0.8px">111</span></div><div class="a t14 c" style="left:894px;top:31px">快递物流</div><div class="a t14 c" style="left:1061px;top:31px"><span style="letter-spacing:0.34px">¥7980.00</span></div><div class="pill pur" style="left:1155px;top:28px;background:#f3f1fc">立即发货<svg style="display:inline-block;vertical-align:-1px;margin-left:3px" width="6" height="10" viewBox="0 0 6 10"><path d="M1 1l4 4-4 4" fill="none" stroke="currentColor" stroke-width="1"/></svg></div><div class="a t14 pur" style="left:1252px;top:31px">详情</div><div class="a t14 pur" style="left:1299px;top:31px">日志</div></div></div><div class="blk" style="top:729.000px"><div class="oh"><div class="a" style="left:19px;top:17px"><svg width="10" height="6" viewBox="0 0 10 6"><path d="M1 1l4 4 4-4" fill="none" stroke="#777" stroke-width="1"/></svg></div><div class="cb" style="left:60px;top:13px"></div><div class="ot" style="left:108px"><span style="letter-spacing:0.3px">#3</span></div><div class="ot" style="left:212px">订单号<span style="letter-spacing:0.33px">:202409314083326227002000</span></div><div class="a" style="left:424px;top:14px"><svg width="11" height="11" viewBox="0 0 11 11"><rect x="3.5" y="0.5" width="7" height="7" rx="1" fill="none" stroke="#806af6" stroke-width="1"/><path d="M1.5 3v6.5a1 1 0 0 0 1 1H8" fill="none" stroke="#806af6" stroke-width="1"/></svg></div><div class="ot" style="left:464px">下单时间<span style="letter-spacing:0.22px">:2024-08-19 09:31:40</span></div><div class="a t14 pur c" style="left:1061px;top:10px"><span class="dash"><span style="letter-spacing:0.34px">¥2199.00</span></span> 改价</div><div class="a t14" style="left:1155px;top:10px;color:#999">待付款</div></div><div class="pr"><div class="img" style="background:#e1d1cb"><span>云商城</span></div><div class="a t12" style="left:82px;top:8px;transform-origin:0 0;transform:scaleX(0.988)"><span class="pur"><span style="letter-spacing:0.3px">#12</span></span> <span style="letter-spacing:0.3px">COACH</span>蔻驰女包奢侈品官网奥莱山茶花<span style="letter-spacing:0.3px">Parker</span>女士<span style="letter-spacing:0.3px">...</span></div><div class="a" style="left:82px;top:24px;font-size:14px;line-height:18px">红色</div><div class="a t14" style="left:82px;top:52px;display:flex;align-items:center"><span style="letter-spacing:0.34px">¥2199.00</span><span style="margin-left:8px"><span style="letter-spacing:0.3px">x1</span></span><span class="tag" style="position:static;margin-left:12px;display:inline-block">待发货</span></div><div class="a t14 c" style="left:472px;top:31px;color:#9d9d92">未申请</div><div class="av" style="left:574px;top:13px;width:36px;height:36px"><i style="top:7.0px;width:36px;font-size:10.0px;line-height:12.0px">商城</i><i style="top:19.5px;left:4.0px;width:28.0px;border-top:1px dotted rgba(255,255,255,.45);height:0"></i><i style="top:24.0px;width:36px;font-size:6.0px;line-height:8.0px;font-weight:bold">· B2C ·</i></div><div class="a t12 pur c" style="left:591px;top:53px">用户<span style="letter-spacing:0.3px">1</span></div><div class="a t12" style="left:650px;top:12px">李白<span style="letter-spacing:0.3px">13434343344</span></div><div class="a t14" style="left:650px;top:31px">北京市<span style="margin:0 .8px">/</span>市辖区<span style="margin:0 .8px">/</span>丰台区</div><div class="a t12 gray" style="left:650px;top:54px"><span style="letter-spacing:0.8px">111</span></div><div class="a t14 c" style="left:894px;top:31px">快递物流</div><div class="a t14 c" style="left:1061px;top:31px"><span style="letter-spacing:0.34px">¥2199.00</span></div><div class="a t14 pur" style="left:1158px;top:31px">详情</div><div class="a t14 pur" style="left:1205px;top:31px">日志</div></div></div><div class="blk" style="top:850.500px"><div class="oh"><div class="a" style="left:19px;top:17px"><svg width="10" height="6" viewBox="0 0 10 6"><path d="M1 1l4 4 4-4" fill="none" stroke="#777" stroke-width="1"/></svg></div><div class="cb" style="left:60px;top:13px"></div><div class="ot" style="left:108px"><span style="letter-spacing:0.3px">#2</span></div><div class="ot" style="left:212px">订单号<span style="letter-spacing:0.33px">:202411122018138070002000</span></div><div class="a" style="left:424px;top:14px"><svg width="11" height="11" viewBox="0 0 11 11"><rect x="3.5" y="0.5" width="7" height="7" rx="1" fill="none" stroke="#806af6" stroke-width="1"/><path d="M1.5 3v6.5a1 1 0 0 0 1 1H8" fill="none" stroke="#806af6" stroke-width="1"/></svg></div><div class="ot" style="left:464px">下单时间<span style="letter-spacing:0.22px">:2024-08-06 23:12:20</span></div><div class="a t14 pur c" style="left:1061px;top:10px"><span class="dash"><span style="letter-spacing:0.34px">¥89.00</span></span> 改价</div><div class="a t14" style="left:1155px;top:10px;color:#999">待付款</div></div><div class="pr"><div class="img" style="background:#cdc6a7"><span>云商城</span></div><div class="a t12" style="left:82px;top:8px;transform-origin:0 0;transform:scaleX(1)"><span class="pur"><span style="letter-spacing:0.3px">#16</span></span> 迪士尼儿童水杯带吸管 <span style="letter-spacing:0.3px">tritan</span>夏季可爱双饮塑料壶<span style="letter-spacing:0.3px">...</span></div><div class="a" style="left:82px;top:24px;font-size:14px;line-height:18px">米妮粉</div><div class="a t14" style="left:82px;top:52px;display:flex;align-items:center"><span style="letter-spacing:0.34px">¥89.00</span><span style="margin-left:8px"><span style="letter-spacing:0.3px">x1</span></span><span class="tag" style="position:static;margin-left:12px;display:inline-block">待发货</span></div><div class="a t14 c" style="left:472px;top:31px;color:#9d9d92">未申请</div><div class="av" style="left:574px;top:13px;width:36px;height:36px"><i style="top:7.0px;width:36px;font-size:10.0px;line-height:12.0px">商城</i><i style="top:19.5px;left:4.0px;width:28.0px;border-top:1px dotted rgba(255,255,255,.45);height:0"></i><i style="top:24.0px;width:36px;font-size:6.0px;line-height:8.0px;font-weight:bold">· B2C ·</i></div><div class="a t12 pur c" style="left:591px;top:53px">用户<span style="letter-spacing:0.3px">1</span></div><div class="a t12" style="left:650px;top:12px">李白<span style="letter-spacing:0.3px">13434343344</span></div><div class="a t14" style="left:650px;top:31px">北京市<span style="margin:0 .8px">/</span>市辖区<span style="margin:0 .8px">/</span>丰台区</div><div class="a t12 gray" style="left:650px;top:54px"><span style="letter-spacing:0.8px">111</span></div><div class="a t14 c" style="left:894px;top:31px">快递物流</div><div class="a t14 c" style="left:1061px;top:31px"><span style="letter-spacing:0.34px">¥89.00</span></div><div class="a t14 pur" style="left:1158px;top:31px">详情</div><div class="a t14 pur" style="left:1205px;top:31px">日志</div></div></div><div class="blk" style="top:972.000px"><div class="oh"><div class="a" style="left:19px;top:17px"><svg width="10" height="6" viewBox="0 0 10 6"><path d="M1 1l4 4 4-4" fill="none" stroke="#777" stroke-width="1"/></svg></div><div class="cb" style="left:60px;top:13px"></div><div class="ot" style="left:108px"><span style="letter-spacing:0.3px">#1</span></div><div class="ot" style="left:212px">订单号<span style="letter-spacing:0.33px">:202411185073949666002000</span></div><div class="a" style="left:424px;top:14px"><svg width="11" height="11" viewBox="0 0 11 11"><rect x="3.5" y="0.5" width="7" height="7" rx="1" fill="none" stroke="#806af6" stroke-width="1"/><path d="M1.5 3v6.5a1 1 0 0 0 1 1H8" fill="none" stroke="#806af6" stroke-width="1"/></svg></div><div class="ot" style="left:464px">下单时间<span style="letter-spacing:0.22px">:2024-04-17 11:18:50</span></div><div class="a t14 pur c" style="left:1061px;top:10px"><span class="dash"><span style="letter-spacing:0.34px">¥7980.00</span></span></div><div class="a t14" style="left:1155px;top:10px;color:#f56c6c">已取消</div></div><div class="pr"><div class="img" style="background:#dccbab"><span>云商城</span></div><div class="a t12" style="left:82px;top:8px;transform-origin:0 0;transform:scaleX(1)"><span class="pur"><span style="letter-spacing:0.3px">#19</span></span> <span style="letter-spacing:0.3px">Apple iPhone 13 Pro Max (A2644) 256GB</span> 苍岭<span style="letter-spacing:0.3px">...</span></div><div class="a t14" style="left:82px;top:52px;display:flex;align-items:center"><span style="letter-spacing:0.34px">¥7980.00</span><span style="margin-left:8px"><span style="letter-spacing:0.3px">x1</span></span><span class="tag" style="position:static;margin-left:12px;display:inline-block">待发货</span></div><div class="a t14 c" style="left:472px;top:31px;color:#9d9d92">未申请</div><div class="av" style="left:574px;top:13px;width:36px;height:36px"><i style="top:7.0px;width:36px;font-size:10.0px;line-height:12.0px">商城</i><i style="top:19.5px;left:4.0px;width:28.0px;border-top:1px dotted rgba(255,255,255,.45);height:0"></i><i style="top:24.0px;width:36px;font-size:6.0px;line-height:8.0px;font-weight:bold">· B2C ·</i></div><div class="a t12 pur c" style="left:591px;top:53px">用户<span style="letter-spacing:0.3px">1</span></div><div class="a t12" style="left:650px;top:12px">李白<span style="letter-spacing:0.3px">13434343344</span></div><div class="a t14" style="left:650px;top:31px">北京市<span style="margin:0 .8px">/</span>市辖区<span style="margin:0 .8px">/</span>丰台区</div><div class="a t12 gray" style="left:650px;top:54px"><span style="letter-spacing:0.8px">111</span></div><div class="a t14 c" style="left:894px;top:31px">快递物流</div><div class="a t14 c" style="left:1061px;top:31px"><span style="letter-spacing:0.34px">¥7980.00</span></div><div class="a t14 pur" style="left:1158px;top:31px">详情</div><div class="a t14 pur" style="left:1205px;top:31px">日志</div></div></div></div><div class="a" style="left:1632px;top:224px;width:6px;height:896px;border-radius:3px;background:#c9c9c9"></div><div class="a" style="left:243px;top:1216px;width:1417px;height:56px;background:#fff;border-radius:4px;box-shadow:0 -3px 10px rgba(0,0,0,.05)"></div><div class="a t14" style="left:263px;top:1234px">已选择 0 项</div><div class="a" style="left:348px;top:1228px;width:88px;height:32px;border:1px solid #e4e7ed;border-radius:4px;font-size:14px;line-height:30px;text-align:center;color:#c0c4cc">批量发货</div><div class="a t14" style="left:1225px;top:1234px;color:#555">共 9 条</div><div class="a" style="left:1286px;top:1228px;width:128px;height:32px;border:1px solid #dcdfe6;border-radius:4px;background:#fff"></div><div class="a t14 c" style="left:1339px;top:1234px;color:#444">10条/页</div><div class="a" style="left:1389px;top:1241px"><svg width="12" height="7" viewBox="0 0 12 7"><path d="M1 1l5 5 5-5" fill="none" stroke="#bbb" stroke-width="1"/></svg></div><div class="a" style="left:1441px;top:1238px"><svg width="7" height="12" viewBox="0 0 7 12"><path d="M6 1L1 6l5 5" fill="none" stroke="#c0c4cc" stroke-width="1.1"/></svg></div><div class="a t14" style="left:1474px;top:1234px;color:#806af6;font-weight:bold">1</div><div class="a" style="left:1507px;top:1238px"><svg width="7" height="12" viewBox="0 0 7 12"><path d="M1 1l5 5-5 5" fill="none" stroke="#c0c4cc" stroke-width="1.1"/></svg></div><div class="a t14" style="left:1542px;top:1234px;color:#444">前往</div><div class="a" style="left:1570px;top:1232px;width:60px;height:24px;border:1px solid #dcdfe6;border-radius:4px;background:#fff"></div><div class="a t14" style="left:1593px;top:1234px;color:#444">1</div><div class="a" style="left:1615px;top:1177px;width:40px;height:40px;border-radius:50%;background:#fff;box-shadow:0 0 10px rgba(0,0,0,.08)"></div><div class="a" style="left:1615px;top:1227px;width:40px;height:40px;border-radius:50%;background:#fff;box-shadow:0 0 10px rgba(0,0,0,.08)"></div><div class="a" style="left:1628px;top:1188px"><svg width="15" height="18" viewBox="0 0 15 18"><path d="M3 12.6C0.6 12.6 0.4 9.4 2 8.6V5.6C2 2.6 4.6 0.4 7.5 0.4S13 2.6 13 5.6V8.6C14.6 9.4 14.4 12.6 12 12.6Z" fill="#806af6"/><path d="M5.5 13.8L7.5 16.5 9.5 13.8Z" fill="#806af6"/></svg></div><div class="a" style="left:1627px;top:1238px"><svg width="17" height="17" viewBox="0 0 17 17"><circle cx="8.5" cy="8" r="7.5" fill="#806af6"/><path d="M2 12l-1.5 4 4.5-2z" fill="#806af6"/><circle cx="5" cy="8" r="1" fill="#fff"/><circle cx="8.5" cy="8" r="1" fill="#fff"/><circle cx="12" cy="8" r="1" fill="#fff"/></svg></div><div class="a" style="left:783px;top:809px;width:143px;height:60px;background:rgba(255,255,255,.88);border-radius:4px;box-shadow:0 2px 12px rgba(0,0,0,.08)"></div><div class="a" style="left:849px;top:864px;width:10px;height:10px;background:rgba(255,255,255,.88);transform:rotate(45deg)"></div><div style="position:absolute;left:0;top:0;opacity:.85"><div class="av" style="left:795px;top:821px"><i style="top:7px;font-size:10px;line-height:12px">商城</i><i style="top:24px;font-size:6px;line-height:8px;font-weight:bold">· B2C ·</i></div><div class="a" style="left:820px;top:846px;width:11px;height:11px;border-radius:3px;background:#f29a70"></div><div class="a t14" style="left:839px;top:821px;color:#555">用户1</div><div class="a t12" style="left:839px;top:842px;color:#888"><span class="pur">#2</span> FwSzHZLt</div></div><div class="a" style="left:1664px;top:-6px;width:14px;height:9px;background:#333;border-radius:50%;transform:rotate(30deg)"></div></body></html>
